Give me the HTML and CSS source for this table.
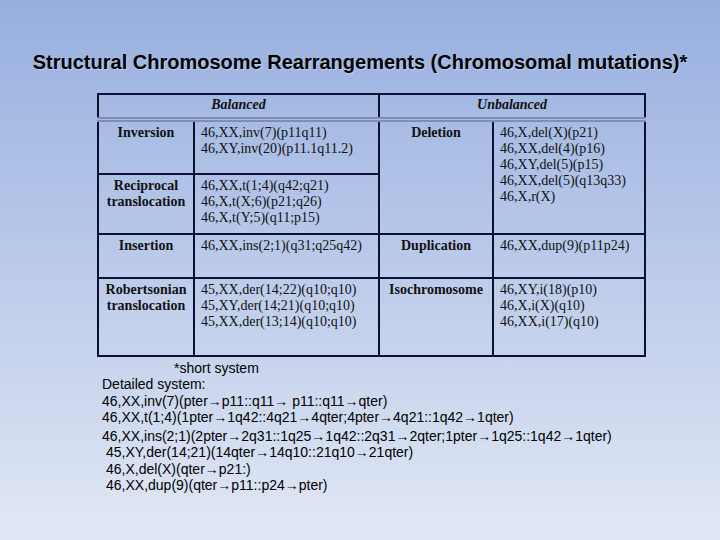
FILE: index.html
```html
<!DOCTYPE html>
<html>
<head>
<meta charset="utf-8">
<link rel="stylesheet" href="styles.css">
</head>
<body>
<div class="slide">
  <h1 class="title">Structural Chromosome Rearrangements (Chromosomal mutations)*</h1>
  <table class="grid">
    <colgroup>
      <col class="c1"><col class="c2"><col class="c3"><col class="c4">
    </colgroup>
    <thead>
      <tr>
        <th colspan="2" class="head">Balanced</th>
        <th colspan="2" class="head">Unbalanced</th>
      </tr>
    </thead>
    <tbody>
      <tr class="r1">
        <td class="label">Inversion</td>
        <td class="data">46,XX,inv(7)(p11q11)<br>46,XY,inv(20)(p11.1q11.2)</td>
        <td class="label" rowspan="2">Deletion</td>
        <td class="data" rowspan="2">46,X,del(X)(p21)<br>46,XX,del(4)(p16)<br>46,XY,del(5)(p15)<br>46,XX,del(5)(q13q33)<br>46,X,r(X)</td>
      </tr>
      <tr class="r2">
        <td class="label">Reciprocal translocation</td>
        <td class="data">46,XX,t(1;4)(q42;q21)<br>46,X,t(X;6)(p21;q26)<br>46,X,t(Y;5)(q11;p15)</td>
      </tr>
      <tr class="r3">
        <td class="label">Insertion</td>
        <td class="data">46,XX,ins(2;1)(q31;q25q42)</td>
        <td class="label">Duplication</td>
        <td class="data">46,XX,dup(9)(p11p24)</td>
      </tr>
      <tr class="r4">
        <td class="label">Robertsonian translocation</td>
        <td class="data">45,XX,der(14;22)(q10;q10)<br>45,XY,der(14;21)(q10;q10)<br>45,XX,der(13;14)(q10;q10)</td>
        <td class="label">Isochromosome</td>
        <td class="data">46,XY,i(18)(p10)<br>46,X,i(X)(q10)<br>46,XX,i(17)(q10)</td>
      </tr>
    </tbody>
  </table>
  <div class="notes">
    <div class="short">*short system</div>
    <div class="line">Detailed system:</div>
    <div class="line">46,XX,inv(7)(pter→p11::q11→ p11::q11→qter)</div>
    <div class="line">46,XX,t(1;4)(1pter→1q42::4q21→4qter;4pter→4q21::1q42→1qter)</div>
    <div class="line gap">46,XX,ins(2;1)(2pter→2q31::1q25→1q42::2q31→2qter;1pter→1q25::1q42→1qter)</div>
    <div class="line ind">45,XY,der(14;21)(14qter→14q10::21q10→21qter)</div>
    <div class="line ind">46,X,del(X)(qter→p21:)</div>
    <div class="line ind">46,XX,dup(9)(qter→p11::p24→pter)</div>
  </div>
</div>
</body>
</html>
```

FILE: styles.css
```css
html, body {
  margin: 0;
  padding: 0;
}
body {
  width: 720px;
  height: 540px;
  overflow: hidden;
  background: linear-gradient(to bottom, #97afdf 0%, #bccbea 50%, #e1e8f5 100%);
}
.slide {
  width: 720px;
  height: 540px;
  padding-top: 50px;
  box-sizing: border-box;
}
.title {
  margin: 0;
  font-family: "Liberation Sans", Arial, sans-serif;
  font-weight: bold;
  font-size: 20px;
  line-height: 24px;
  text-align: center;
  color: #000;
  text-shadow: 1px 1px 1px rgba(255,255,255,0.35);
}
.grid {
  margin: 19px 0 0 97px;
  width: 547px;
  border-collapse: collapse;
  table-layout: fixed;
  font-family: "Liberation Serif", "Times New Roman", serif;
  font-size: 14px;
  color: #111;
}
.c1 { width: 96px; }
.c2 { width: 185px; }
.c3 { width: 114px; }
.c4 { width: 152px; }
.grid th, .grid td {
  border: 2px solid #0b1133;
  vertical-align: top;
  padding: 0;
}
.head {
  font-style: italic;
  font-weight: bold;
  text-align: center;
  height: 20px;
  line-height: 16px;
  padding: 2px 0 0 0 !important;
  border-bottom: 5px double #7f8fae !important;
}
.label {
  font-weight: bold;
  text-align: center;
  line-height: 16px;
  padding-top: 3px !important;
}
.data {
  line-height: 16px;
  padding: 3px 0 0 6px !important;
}
.r1 td { height: 48px; }
.r2 td { height: 55px; }
.r3 td { height: 39px; }
.r4 td { height: 73px; }
.notes {
  margin-top: 3px;
  padding-left: 102px;
  font-family: "Liberation Sans", Arial, sans-serif;
  font-size: 14px;
  line-height: 16.3px;
  color: #000;
}
.short {
  padding-left: 72px;
}
.gap {
  margin-top: 3px;
}
.ind {
  padding-left: 4px;
}
```
